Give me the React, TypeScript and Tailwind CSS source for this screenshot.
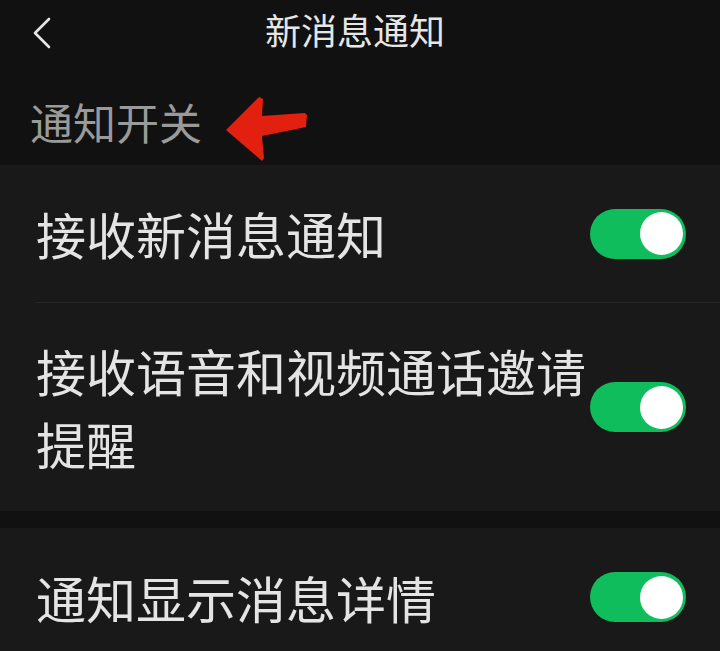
import React from 'react';

const Toggle: React.FC = () => (
  <div className="w-[96px] h-[50px] shrink-0 rounded-full bg-[#10bd5d] p-[3.5px] flex justify-end items-center">
    <div className="w-[43px] h-[43px] rounded-full bg-white" />
  </div>
);

const rowText = "text-[50px] text-[#e4e4e4] leading-[73px]";

export default function App() {
  return (
    <div className="w-[720px] h-[651px] overflow-hidden bg-[#111111] font-['Noto_Sans_CJK_SC','Noto_Sans',sans-serif]">
      {/* Header */}
      <div className="h-[66px] grid grid-cols-[1fr_auto_1fr] items-center">
        <div className="pl-[32px] flex items-center">
          <svg width="20" height="32" viewBox="0 0 20 32" fill="none">
            <path d="M17 2 L3 16 L17 30" stroke="#e6e6e6" strokeWidth="2.6" strokeLinecap="round" strokeLinejoin="round" />
          </svg>
        </div>
        <div className="text-[36px] leading-none text-[#e6e6e6] mb-[8px] mr-[10px]">新消息通知</div>
        <div />
      </div>

      {/* Section label */}
      <div className="h-[99px] pt-[26px] pl-[30px] flex items-start gap-[22px]">
        <span className="text-[43px] leading-[58px] text-[#9a9a9a]">通知开关</span>
        <svg width="86" height="68" viewBox="0 0 86 68" className="mt-[4px]">
          <path
            d="M2 34 L35 1 L39 3 L38 20 L81 17 L83 19 L82 31 L38 40 L40 62 L38 65 Z"
            fill="#e2200f"
          />
        </svg>
      </div>

      {/* Card 1 */}
      <div className="bg-[#191919]">
        <div className="h-[137px] pl-[36px] pr-[34px] flex items-center justify-between">
          <span className={rowText}>接收新消息通知</span>
          <Toggle />
        </div>
        <div className="ml-[36px] h-px bg-[#262626]" />
        <div className="h-[208px] pl-[36px] pr-[34px] flex items-center justify-between">
          <span className={`${rowText} w-[555px]`}>接收语音和视频通话邀请提醒</span>
          <Toggle />
        </div>
      </div>

      <div className="h-[17px]" />

      {/* Card 2 */}
      <div className="bg-[#191919]">
        <div className="h-[138px] pl-[36px] pr-[34px] flex items-center justify-between">
          <span className={rowText}>通知显示消息详情</span>
          <Toggle />
        </div>
      </div>
    </div>
  );
}
